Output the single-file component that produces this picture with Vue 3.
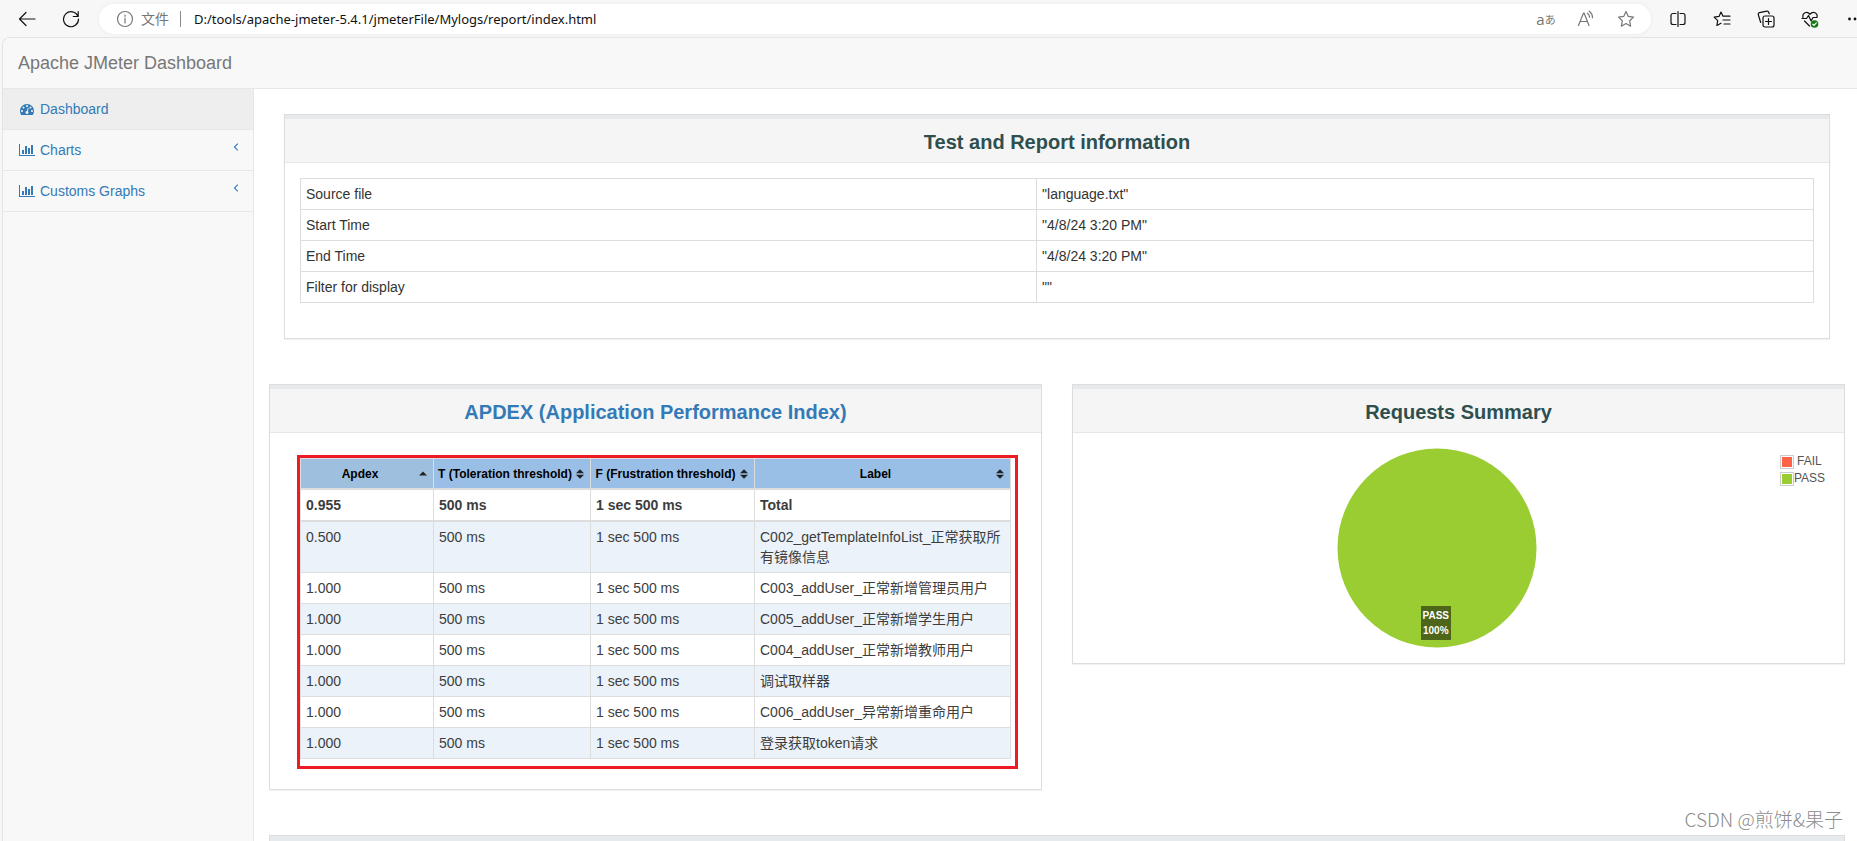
<script setup>
const address = 'D:/tools/apache-jmeter-5.4.1/jmeterFile/Mylogs/report/index.html'

const info = [
  ['Source file', '"language.txt"'],
  ['Start Time', '"4/8/24 3:20 PM"'],
  ['End Time', '"4/8/24 3:20 PM"'],
  ['Filter for display', '""'],
]

const columns = [
  { title: 'Apdex', sorted: true },
  { title: 'T (Toleration threshold)', sorted: false },
  { title: 'F (Frustration threshold)', sorted: false },
  { title: 'Label', sorted: false },
]

const total = ['0.955', '500 ms', '1 sec 500 ms', 'Total']

const rows = [
  ['0.500', '500 ms', '1 sec 500 ms', 'C002_getTemplateInfoList_正常获取所有镜像信息'],
  ['1.000', '500 ms', '1 sec 500 ms', 'C003_addUser_正常新增管理员用户'],
  ['1.000', '500 ms', '1 sec 500 ms', 'C005_addUser_正常新增学生用户'],
  ['1.000', '500 ms', '1 sec 500 ms', 'C004_addUser_正常新增教师用户'],
  ['1.000', '500 ms', '1 sec 500 ms', '调试取样器'],
  ['1.000', '500 ms', '1 sec 500 ms', 'C006_addUser_异常新增重命用户'],
  ['1.000', '500 ms', '1 sec 500 ms', '登录获取token请求'],
]
</script>

<template>
  <div class="window">
    <header class="browser">
      <button class="tool" type="button" aria-label="Back">
        <svg width="18" height="18" viewBox="0 0 18 18"><path d="M17 9H1.5M8 2.500 1.500 9 8 15.500" /></svg>
      </button>
      <button class="tool" type="button" aria-label="Refresh">
        <svg width="18" height="18" viewBox="0 0 18 18"><path d="M16 6.500A7.500 7.500 0 1 0 16.500 9M16.200 1.500V6.500H11.300" /></svg>
      </button>
      <div class="pill">
        <svg class="info" width="18" height="18" viewBox="0 0 18 18"><circle cx="9" cy="9" r="7.500" /><path d="M9 8v5M9 5v1.300" /></svg>
        <label class="scheme" for="address">文件</label>
        <input id="address" class="address" type="text" :value="address" />
        <button class="action" type="button" aria-label="Translate"><span class="latin">a</span><span class="kana">あ</span></button>
        <button class="action" type="button" aria-label="Read aloud">
          <svg width="18" height="18" viewBox="0 0 18 18"><path d="M1.500 15.500 6.500 3h.6L12 15.500M3.200 11.500h7.200M10.500 3.200c1.400 1 2 2.300 2 4M12.200 1.200c2.200 1.500 3.300 3.600 3.300 6.500" /></svg>
        </button>
        <button class="action" type="button" aria-label="Add to favorites">
          <svg width="18" height="18" viewBox="0 0 18 18"><path d="m9 1.500 2.300 4.900 5.200.7-3.800 3.700.9 5.400L9 13.600l-4.600 2.600.9-5.400L1.500 7.100l5.200-.7z" /></svg>
        </button>
      </div>
      <button class="tool" type="button" aria-label="Split screen">
        <svg width="18" height="18" viewBox="0 0 18 18"><path d="M7 3.500H4A2 2 0 0 0 2 5.500v7a2 2 0 0 0 2 2h3M11 3.500h3a2 2 0 0 1 2 2v7a2 2 0 0 1-2 2h-3M9 1.500v15" /></svg>
      </button>
      <button class="tool" type="button" aria-label="Favorites">
        <svg width="18" height="18" viewBox="0 0 18 18"><path d="M10 6.200 8 2 6 6.400l-4.800.7 3.500 3.500-.8 4.900L8 13.200M10.500 6.200H17M10 10h7M11 14h6" /></svg>
      </button>
      <button class="tool" type="button" aria-label="Collections">
        <svg width="18" height="18" viewBox="0 0 18 18"><rect x="6" y="6" width="11" height="11" rx="2" /><path d="M11.500 8.500v6M8.500 11.500h6M3.700 12.500 1.300 4.800A1.800 1.800 0 0 1 2.500 2.600l7.200-1.500a1.800 1.800 0 0 1 2 1.200l.5 1.500" /></svg>
      </button>
      <button class="tool" type="button" aria-label="Browser essentials">
        <svg width="18" height="18" viewBox="0 0 18 18"><path d="M2 7.500C1 3 6 .5 9 4.300 12 .5 17 3 16 7.500M1 8.500h4.500l2-3 2.600 5.500 1.900-3.500h4M3.500 11 8.500 16" /><circle class="ok" cx="13.500" cy="14" r="3.800" /><path class="tick" d="m11.800 14.200 1.200 1.100 2.300-2.500" /></svg>
      </button>
      <button class="tool more" type="button" aria-label="Settings and more">
        <svg width="18" height="18" viewBox="0 0 18 18"><g class="dots"><circle cx="3.500" cy="9" r="1.400" /><circle cx="9" cy="9" r="1.400" /><circle cx="14.500" cy="9" r="1.400" /></g></svg>
      </button>
    </header>

    <div class="page">
      <nav class="navbar"><a class="brand" href="#">Apache JMeter Dashboard</a></nav>
      <div class="body">
        <aside class="sidebar">
          <a class="item active" href="#">
            <svg width="14" height="14" viewBox="0 0 1792 1792"><path d="M384 1152q0-53-37.500-90.500t-90.500-37.500-90.500 37.500-37.500 90.500 37.500 90.500 90.500 37.500 90.500-37.500 37.500-90.500zm192-448q0-53-37.500-90.500t-90.500-37.500-90.500 37.500-37.500 90.500 37.500 90.500 90.500 37.500 90.500-37.500 37.500-90.500zm428 481l101-382q6-26-7.500-48.500t-38.500-29.500-48 6.500-30 39.500l-101 382q-60 5-107 43.500t-63 98.500q-20 77 20 146t117 89 146-20 89-117q16-60-6-117t-72-91zm660-33q0-53-37.500-90.500t-90.500-37.500-90.500 37.500-37.500 90.500 37.500 90.500 90.500 37.500 90.500-37.500 37.500-90.500zm-640-640q0-53-37.500-90.500t-90.500-37.500-90.500 37.500-37.500 90.500 37.500 90.500 90.500 37.500 90.500-37.500 37.500-90.500zm448 192q0-53-37.500-90.500t-90.500-37.500-90.500 37.500-37.500 90.500 37.500 90.500 90.500 37.500 90.500-37.500 37.500-90.500zm320 448q0 261-141 483-19 29-54 29h-1402q-35 0-54-29-141-221-141-483 0-182 71-348t191-286 286-191 348-71 348 71 286 191 191 286 71 348z" /></svg>
            <span class="text">Dashboard</span>
          </a>
          <a v-for="name in ['Charts', 'Customs Graphs']" :key="name" class="item" href="#">
            <svg width="16" height="14" viewBox="0 0 2048 1792"><path d="M640 896v512h-256v-512h256zM1024 384v1024h-256v-1024h256zM2048 1536v128h-2048v-1536h128v1408h1920zM1408 640v768h-256v-768h256zM1792 256v1152h-256v-1152h256z" /></svg>
            <span class="text">{{ name }}</span>
            <svg class="chevron" width="6" height="8" viewBox="0 0 6 8"><path d="M4.800.7 1.500 4l3.300 3.300" /></svg>
          </a>
        </aside>

        <main class="content">
          <section class="panel inset">
            <h2 class="title">Test and Report information</h2>
            <div class="inner">
              <table class="grid facts">
                <colgroup><col class="key" /><col /></colgroup>
                <tbody>
                  <tr v-for="[key, value] in info" :key="key">
                    <td>{{ key }}</td>
                    <td>{{ value }}</td>
                  </tr>
                </tbody>
              </table>
            </div>
          </section>

          <div class="columns">
            <section class="panel">
              <h2 class="title"><a href="#">APDEX (Application Performance Index)</a></h2>
              <div class="inner">
                <div class="marked">
                  <table class="grid apdex">
                    <colgroup><col class="c1" /><col class="c2" /><col class="c3" /><col /></colgroup>
                    <thead>
                      <tr>
                        <th v-for="col in columns" :key="col.title" :class="{ sorted: col.sorted }">
                          <button class="sort" type="button">
                            <span>{{ col.title }}</span>
                            <svg width="8" height="10" viewBox="0 0 8 10">
                              <path v-if="col.sorted" d="M0 6.500 4 2.500l4 4z" />
                              <path v-else d="M0 4.300 4 .3l4 4zM0 5.700l4 4 4-4z" />
                            </svg>
                          </button>
                        </th>
                      </tr>
                    </thead>
                    <tbody class="total">
                      <tr><td v-for="cell in total" :key="cell">{{ cell }}</td></tr>
                    </tbody>
                    <tbody class="samples">
                      <tr v-for="row in rows" :key="row[3]">
                        <td v-for="cell in row" :key="cell">{{ cell }}</td>
                      </tr>
                    </tbody>
                  </table>
                </div>
              </div>
            </section>

            <section class="panel">
              <h2 class="title">Requests Summary</h2>
              <div class="inner chart">
                <svg class="pie" width="200" height="200" viewBox="0 0 200 200"><circle cx="100" cy="100" r="99.500" /></svg>
                <div class="slice">PASS<br />100%</div>
                <ul class="legend">
                  <li><i class="swatch fail"></i><span>FAIL</span></li>
                  <li><i class="swatch pass"></i><span>PASS</span></li>
                </ul>
              </div>
            </section>
          </div>

          <section class="panel next"></section>
        </main>
      </div>
    </div>
    <div class="watermark">CSDN @煎饼&amp;果子</div>
  </div>
</template>

<style>
body {
  margin: 0;
}
</style>

<style scoped>
* {
  box-sizing: border-box;
}
.window {
  position: relative;
  display: flex;
  flex-direction: column;
  height: 100vh;
  overflow: hidden;
  background: #f7f7f7;
  color: #333;
  font: 14px/20px "Liberation Sans", "Noto Sans CJK SC", sans-serif;
}
a {
  color: #337ab7;
  text-decoration: none;
}
button {
  padding: 0;
  border: 0;
  background: none;
  color: inherit;
  font: inherit;
}

/* Browser toolbar */
.browser {
  display: flex;
  flex: none;
  align-items: center;
  height: 37px;
  padding-left: 5px;
}
.browser svg {
  flex: none;
  fill: none;
  stroke: currentColor;
  stroke-width: 1.2;
  stroke-linecap: round;
  stroke-linejoin: round;
}
.tool {
  display: flex;
  flex: none;
  align-items: center;
  justify-content: center;
  width: 44px;
  height: 32px;
  color: #111;
}
.more {
  justify-content: flex-start;
  width: 25px;
  padding-left: 14px;
}
.browser .dots {
  fill: #111;
  stroke: none;
}
.browser .ok {
  fill: #107c10;
  stroke: none;
}
.browser .tick {
  stroke: #fff;
}
.pill {
  display: flex;
  flex: 1;
  align-items: center;
  height: 30px;
  margin: 0 5px 0 6px;
  padding: 0 5px 0 17px;
  border-radius: 15px;
  background: #fff;
  box-shadow: 0 0 4px rgba(0, 0, 0, 0.06);
  color: #767676;
}
.scheme {
  margin-left: 7px;
  padding-right: 11px;
  border-right: 1px solid #8a8a8a;
  line-height: 16px;
}
.address {
  flex: 1;
  min-width: 0;
  padding: 0 0 0 13px;
  border: 0;
  outline: 0;
  background: none;
  color: #111;
  font: 13px/20px "Noto Sans", "Open Sans", sans-serif;
}
.action {
  display: flex;
  flex: none;
  align-items: center;
  justify-content: center;
  width: 40px;
  height: 28px;
}
.latin {
  font: 15px/20px "Open Sans", sans-serif;
}
.kana {
  font: 11px/20px "Noto Sans CJK JP", sans-serif;
}

/* Page frame */
.page {
  display: flex;
  flex: 1;
  flex-direction: column;
  min-height: 0;
  margin-left: 2px;
  overflow: hidden;
  border: solid #e4e4e4;
  border-width: 1px 0 0 1px;
  border-radius: 8px 0 0 0;
  background: #fff;
}
.navbar {
  flex: none;
  padding: 15px;
  border-bottom: 1px solid #e7e7e7;
  background: #f8f8f8;
}
.brand {
  display: block;
  color: #777;
  font-size: 18px;
  line-height: 20px;
}
.body {
  display: flex;
  flex: 1;
  min-height: 0;
}
.sidebar {
  flex: none;
  width: 251px;
  border-right: 1px solid #e7e7e7;
  background: #f8f8f8;
}
.item {
  display: flex;
  align-items: center;
  height: 41px;
  padding: 0 14px 0 16px;
  border-bottom: 1px solid #e7e7e7;
}
.item.active {
  padding-left: 17px;
  background: #eee;
}
.item svg {
  fill: currentColor;
}
.text {
  flex: 1;
  margin-left: 5px;
}
.active .text {
  margin-left: 6px;
}
.item .chevron {
  align-self: flex-start;
  margin-top: 13px;
  fill: none;
  stroke: currentColor;
  stroke-width: 1.1;
}
.content {
  display: flex;
  flex: 1;
  flex-direction: column;
  gap: 45px;
  min-width: 0;
  padding: 25px 12px 0 15px;
  overflow: hidden;
}

/* Panels */
.panel {
  flex: none;
  border: 1px solid #ddd;
  background: #fff;
  box-shadow: 0 1px 1px rgba(0, 0, 0, 0.05);
}
.inset {
  margin: 0 15px;
}
.title {
  margin: 0;
  padding: 11px 0 8px;
  border-top: 4px solid #e7eaec;
  border-bottom: 1px solid #e7e7e7;
  background: #f5f5f5;
  color: #2f4f4f;
  font-size: 20px;
  font-weight: 700;
  line-height: 24px;
  text-align: center;
}
.inner {
  padding: 15px;
}
.columns {
  display: grid;
  flex: none;
  grid-template-columns: 1fr 1fr;
  gap: 30px;
  align-items: start;
}
.next {
  height: 120px;
  background: #e7eaec;
}

/* Tables */
.grid {
  width: 100%;
  border: solid #ddd;
  border-width: 1px 0 0 1px;
  border-spacing: 0;
  table-layout: fixed;
}
.grid td {
  padding: 5px;
  border: solid #ddd;
  border-width: 0 1px 1px 0;
  vertical-align: top;
}
.facts {
  margin-bottom: 20px;
}
.key {
  width: 48.65%;
}
.marked {
  position: relative;
  margin: 10px 15px 15px;
}
.marked::after {
  content: "";
  position: absolute;
  inset: -3px -7px -10px -3px;
  border: 3px solid #ed1c24;
  pointer-events: none;
}
.c1 {
  width: 133px;
}
.c2 {
  width: 157px;
}
.c3 {
  width: 164px;
}
.apdex {
  color: #3d3d3d;
}
.apdex th {
  padding: 5px 6px 4px 4px;
  border: solid #ddd;
  border-width: 0 1px 2px 0;
  background: #99bfe6;
  color: #000;
}
.apdex th.sorted {
  background: #9fbfdf;
}
.sort {
  display: flex;
  align-items: center;
  width: 100%;
  font-size: 12px;
  font-weight: 700;
  line-height: 20px;
}
.sort span {
  flex: 1;
  white-space: nowrap;
}
.sort svg {
  flex: none;
  margin-left: 4px;
  fill: #222;
}
.total td {
  border-bottom-width: 2px;
  font-weight: 700;
}
.samples tr:nth-child(odd) td {
  background: #ebf2fa;
}

/* Pie chart */
.chart {
  position: relative;
  display: flex;
  justify-content: center;
}
.pie {
  margin-right: 44px;
  fill: #9acd32;
}
.slice {
  position: absolute;
  bottom: 23px;
  left: calc(50% - 38px);
  padding: 2px;
  background: rgba(0, 0, 0, 0.5);
  color: #fff;
  font-size: 10px;
  font-weight: 700;
  line-height: 15px;
  text-align: center;
}
.legend {
  position: absolute;
  top: 20px;
  right: 19px;
  margin: 0;
  padding: 0;
  color: #545454;
  font-size: 12px;
  line-height: 17px;
  list-style: none;
}
.legend li {
  display: flex;
  align-items: center;
}
.legend span {
  flex: 1;
  text-align: center;
}
.swatch {
  width: 14px;
  height: 14px;
  padding: 1px;
  border: 1px solid #ccc;
  background-clip: content-box;
}
.fail {
  background-color: #ff6347;
}
.pass {
  background-color: #9acd32;
}

.watermark {
  position: absolute;
  right: 14px;
  bottom: 10px;
  color: #8c8c8c;
  font: 300 19px/24px "Noto Sans CJK SC", sans-serif;
}
</style>
